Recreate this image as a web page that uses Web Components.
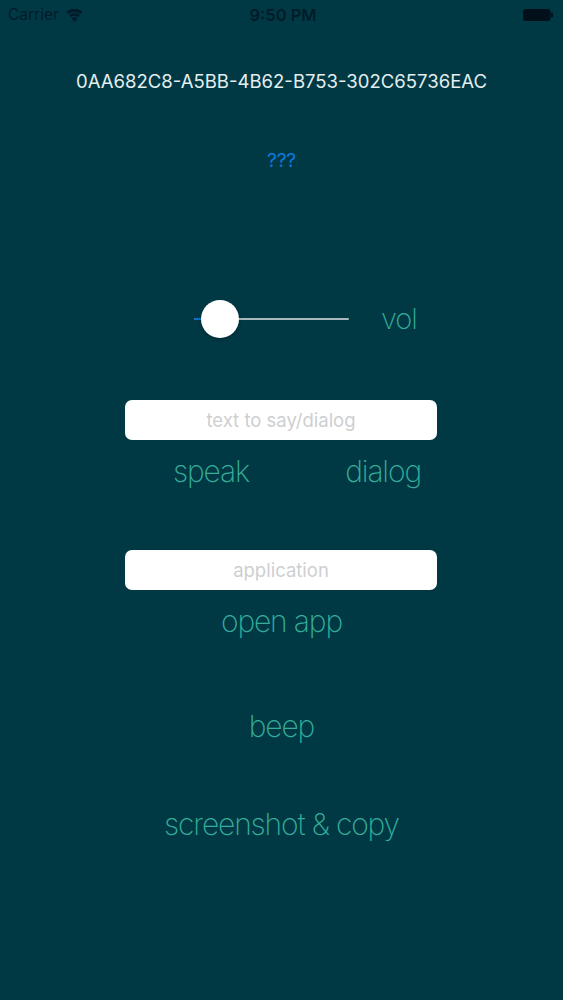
<!DOCTYPE html>
<html>
<head>
<meta charset="utf-8">
<style>
  html, body { margin: 0; padding: 0; background: #003944; }
</style>
</head>
<body>
<app-screen>
  <status-bar></status-bar>
  <div class="uuid" style="color:#e4eef0;font:400 18.55px/24px Inter,sans-serif;text-align:center;margin-top:40px">0AA682C8-A5BB-4B62-B753-302C65736EAC</div>
  <div style="color:#0a7ae0;font:400 19px/24px Inter,sans-serif;text-align:center;margin-top:56px">???</div>
  <vol-slider style="margin-top:126px"></vol-slider>
  <text-box placeholder="text to say/dialog" style="margin-top:61px"></text-box>
  <div class="row" style="display:flex;width:248px;margin:11px 0 0 173px;justify-content:space-between">
    <link-button>speak</link-button>
    <link-button>dialog</link-button>
  </div>
  <text-box placeholder="application" style="margin-top:59px"></text-box>
  <link-button style="margin-top:11px">open app</link-button>
  <link-button style="margin-top:65px">beep</link-button>
  <link-button style="margin-top:58px">screenshot &amp; copy</link-button>
</app-screen>
<script>
class AppScreen extends HTMLElement {
  connectedCallback() {
    this.attachShadow({ mode: 'open' });
    this.shadowRoot.innerHTML = `
      <style>
        :host { display: flex; flex-direction: column; width: 563px; height: 1000px; background: #003944; overflow: hidden; }
      </style>
      <slot></slot>
    `;
  }
}
class StatusBar extends HTMLElement {
  connectedCallback() {
    this.attachShadow({ mode: 'open' });
    this.shadowRoot.innerHTML = `
      <style>
        :host { display: grid; grid-template-columns: 1fr auto 1fr; align-items: center; height: 30px; padding: 0 9px 0 8px; box-sizing: border-box; color: #011c28; font: 400 15.5px/30px Inter, sans-serif; margin-bottom: -1px; }
        .left { display: flex; align-items: center; gap: 7px; }
        .time { font-weight: 600; font-size: 16.5px; padding-left: 4px; }
        .right { display: flex; justify-content: flex-end; }
        svg { display: block; }
      </style>
      <div class="left">
        <span>Carrier</span>
        <svg width="17" height="13" viewBox="0 0 16 12" fill="#011c28"><path d="M8 12 5.200 8.500a4.500 4.500 0 0 1 5.600 0zM4.500 7.600 3 5.500a8 8 0 0 1 10 0l-1.500 2.100a5.800 5.800 0 0 0-7 0zM2.300 4.800.3 2.500a12 12 0 0 1 15.400 0l-2 2.300a9.200 9.200 0 0 0-11.400 0z"/></svg>
      </div>
      <div class="time">9:50 PM</div>
      <div class="right">
        <svg width="32" height="14" viewBox="0 0 32 14" fill="#01101a"><rect x="1" y="1" width="27.500" height="12" rx="2.500"/><rect x="29" y="4.500" width="2" height="5" rx="1"/></svg>
      </div>
    `;
  }
}
class VolSlider extends HTMLElement {
  connectedCallback() {
    this.attachShadow({ mode: 'open' });
    this.shadowRoot.innerHTML = `
      <style>
        :host { display: flex; align-items: center; height: 40px; padding-left: 194px; }
        .track { position: relative; width: 155px; height: 2.5px; background: #a9b8bd; border-radius: 1.25px; }
        .fill { width: 10px; height: 2.5px; background: #0a6fc8; border-radius: 1.25px 0 0 1.25px; }
        .thumb { position: absolute; left: 7px; top: -17.75px; width: 38px; height: 38px; border-radius: 50%; background: #fff; box-shadow: 0 2px 4px rgba(0,0,0,.2); }
        .label { margin-left: 32px; color: #35ad9a; font: 200 29px/40px Inter, sans-serif; letter-spacing: -1.1px; }
      </style>
      <div class="track"><div class="fill"></div><div class="thumb"></div></div>
      <span class="label">vol</span>
    `;
  }
}
class TextBox extends HTMLElement {
  connectedCallback() {
    this.attachShadow({ mode: 'open' });
    this.shadowRoot.innerHTML = `
      <style>
        :host { display: block; width: 312px; height: 40px; margin-left: 125px; }
        .box { height: 100%; background: #fff; border-radius: 7px; color: #cdcfd1; font: 400 18.500px/40px Inter, sans-serif; text-align: center; }
      </style>
      <div class="box">${this.getAttribute('placeholder')}</div>
    `;
  }
}
class LinkButton extends HTMLElement {
  connectedCallback() {
    this.attachShadow({ mode: 'open' });
    this.shadowRoot.innerHTML = `
      <style>
        :host { display: block; text-align: center; color: #35ad9a; font: 200 30px/40px Inter, sans-serif; letter-spacing: -1.15px; }
      </style>
      <slot></slot>
    `;
  }
}
customElements.define('app-screen', AppScreen);
customElements.define('status-bar', StatusBar);
customElements.define('vol-slider', VolSlider);
customElements.define('text-box', TextBox);
customElements.define('link-button', LinkButton);
</script>
</body>
</html>
